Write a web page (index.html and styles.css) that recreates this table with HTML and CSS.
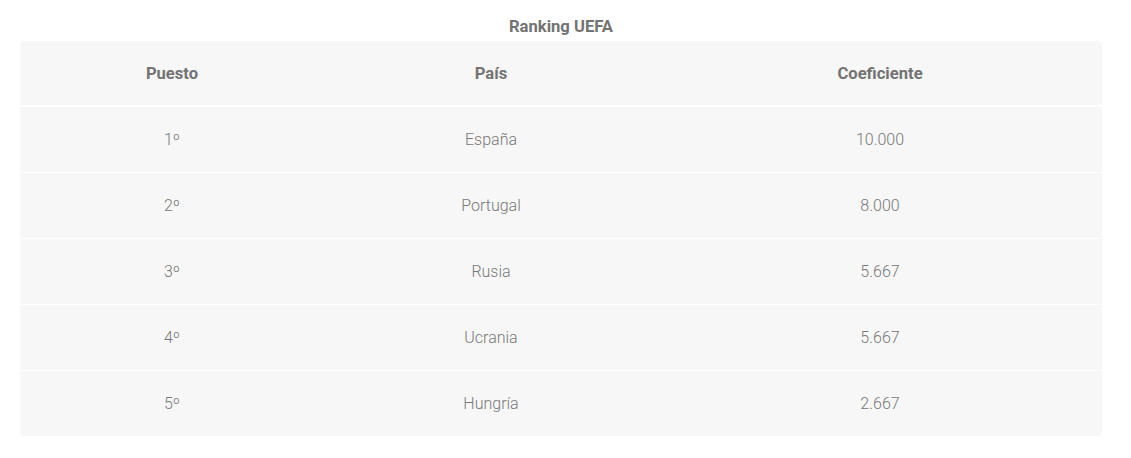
FILE: index.html
```html
<!DOCTYPE html>
<html lang="es">
<head>
<meta charset="utf-8">
<title>Ranking UEFA</title>
<link rel="stylesheet" href="styles.css">
</head>
<body>
<div class="wrap">
  <h2 class="caption">Ranking UEFA</h2>
  <table class="ranking">
    <thead>
      <tr><th class="c1">Puesto</th><th class="c2">País</th><th class="c3">Coeficiente</th></tr>
    </thead>
    <tbody>
      <tr><td>1º</td><td>España</td><td>10.000</td></tr>
      <tr><td>2º</td><td>Portugal</td><td>8.000</td></tr>
      <tr><td>3º</td><td>Rusia</td><td>5.667</td></tr>
      <tr><td>4º</td><td>Ucrania</td><td>5.667</td></tr>
      <tr><td>5º</td><td>Hungría</td><td>2.667</td></tr>
    </tbody>
  </table>
</div>
</body>
</html>
```
FILE: styles.css
```css
html, body {
  margin: 0;
  padding: 0;
  background: #ffffff;
  font-family: Roboto, "Liberation Sans", sans-serif;
}
.wrap {
  width: 1082px;
  margin-left: 20px;
  padding-top: 14px;
}
.caption {
  margin: 0;
  height: 27px;
  font-size: 16.6px;
  font-weight: 700;
  line-height: 25px;
  text-align: center;
  color: #737373;
}
.ranking {
  width: 1082px;
  border-collapse: separate;
  border-spacing: 0;
  table-layout: fixed;
  background: #f7f7f7;
  border-radius: 4px;
  overflow: hidden;
}
.ranking .c1 { width: 304px; }
.ranking .c2 { width: 334px; }
.ranking .c3 { width: 444px; }
.ranking th {
  height: 64px;
  padding: 0;
  font-size: 16.6px;
  font-weight: 700;
  color: #737373;
  text-align: center;
  vertical-align: middle;
}
.ranking td {
  height: 65px;
  padding: 0;
  border-top: 1px solid #ffffff;
  font-size: 16px;
  font-weight: 300;
  color: #777777;
  text-align: center;
  vertical-align: middle;
}
.ranking tbody tr:first-child td {
  border-top-width: 2px;
}
```
